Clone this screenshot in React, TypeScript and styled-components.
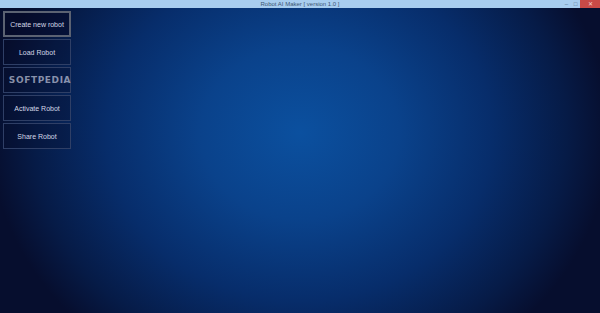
import React from 'react';
import styled, {createGlobalStyle} from 'styled-components';

const Global = createGlobalStyle`
    html, body {
        margin: 0;
        padding: 0;
        width: 600px;
        height: 313px;
        overflow: hidden;
        font-family: "Liberation Sans", Arial, sans-serif;
    }
`;

const Window = styled.div`
    width: 600px;
    height: 313px;
    display: flex;
    flex-direction: column;
`;

const TitleBar = styled.div`
    height: 8px;
    flex: none;
    background: #a8cdef;
    display: flex;
    align-items: center;
    justify-content: center;
    position: relative;
`;

const Title = styled.div`
    font-size: 6px;
    line-height: 8px;
    color: #3d5673;
`;

const Controls = styled.div`
    position: absolute;
    right: 0;
    top: 0;
    height: 8px;
    display: flex;
    align-items: center;
`;

const Ctrl = styled.div<{ $close?: boolean }>`
    width: ${p => p.$close ? '20px' : '9px'};
    height: 8px;
    background: ${p => p.$close ? '#c94a47' : 'transparent'};
    color: ${p => p.$close ? '#f4d0cf' : '#4d6a8a'};
    font-size: 6px;
    line-height: 8px;
    text-align: center;
`;

const Stage = styled.div`
    flex: 1;
    background: radial-gradient(ellipse 310px 270px at 300px 125px, #0b509f 0%, #0a428b 32%, #072d6b 62%, #061b47 86%, #060e2e 100%);
    padding: 3px 0 0 3px;
    display: flex;
    flex-direction: column;
    gap: 2px;
`;

const MenuButton = styled.div<{ $focused?: boolean }>`
    width: 68px;
    height: 26px;
    box-sizing: border-box;
    border: ${p => p.$focused ? '2px solid #5b6272' : '1px solid #2f3f66'};
    background: ${p => p.$focused ? 'rgba(6, 10, 40, 0.55)' : 'rgba(6, 10, 40, 0.25)'};
    color: #d2d7e6;
    font-size: 7px;
    display: flex;
    align-items: center;
    justify-content: center;
`;

const Watermark = styled.span`
    font-size: 9px;
    font-weight: bold;
    letter-spacing: 0.6px;
    margin-left: 6px;
    color: rgba(195, 200, 220, 0.7);
    font-family: "DejaVu Sans", sans-serif;
`;

export default function App() {
    return <Window>
        <Global/>
        <TitleBar>
            <Title>Robot AI Maker [ version 1.0 ]</Title>
            <Controls>
                <Ctrl>–</Ctrl>
                <Ctrl>□</Ctrl>
                <Ctrl $close>✕</Ctrl>
            </Controls>
        </TitleBar>
        <Stage>
            <MenuButton $focused>Create new robot</MenuButton>
            <MenuButton>Load Robot</MenuButton>
            <MenuButton>
                <Watermark>SOFTPEDIA</Watermark>
            </MenuButton>
            <MenuButton>Activate Robot</MenuButton>
            <MenuButton>Share Robot</MenuButton>
        </Stage>
    </Window>;
}
